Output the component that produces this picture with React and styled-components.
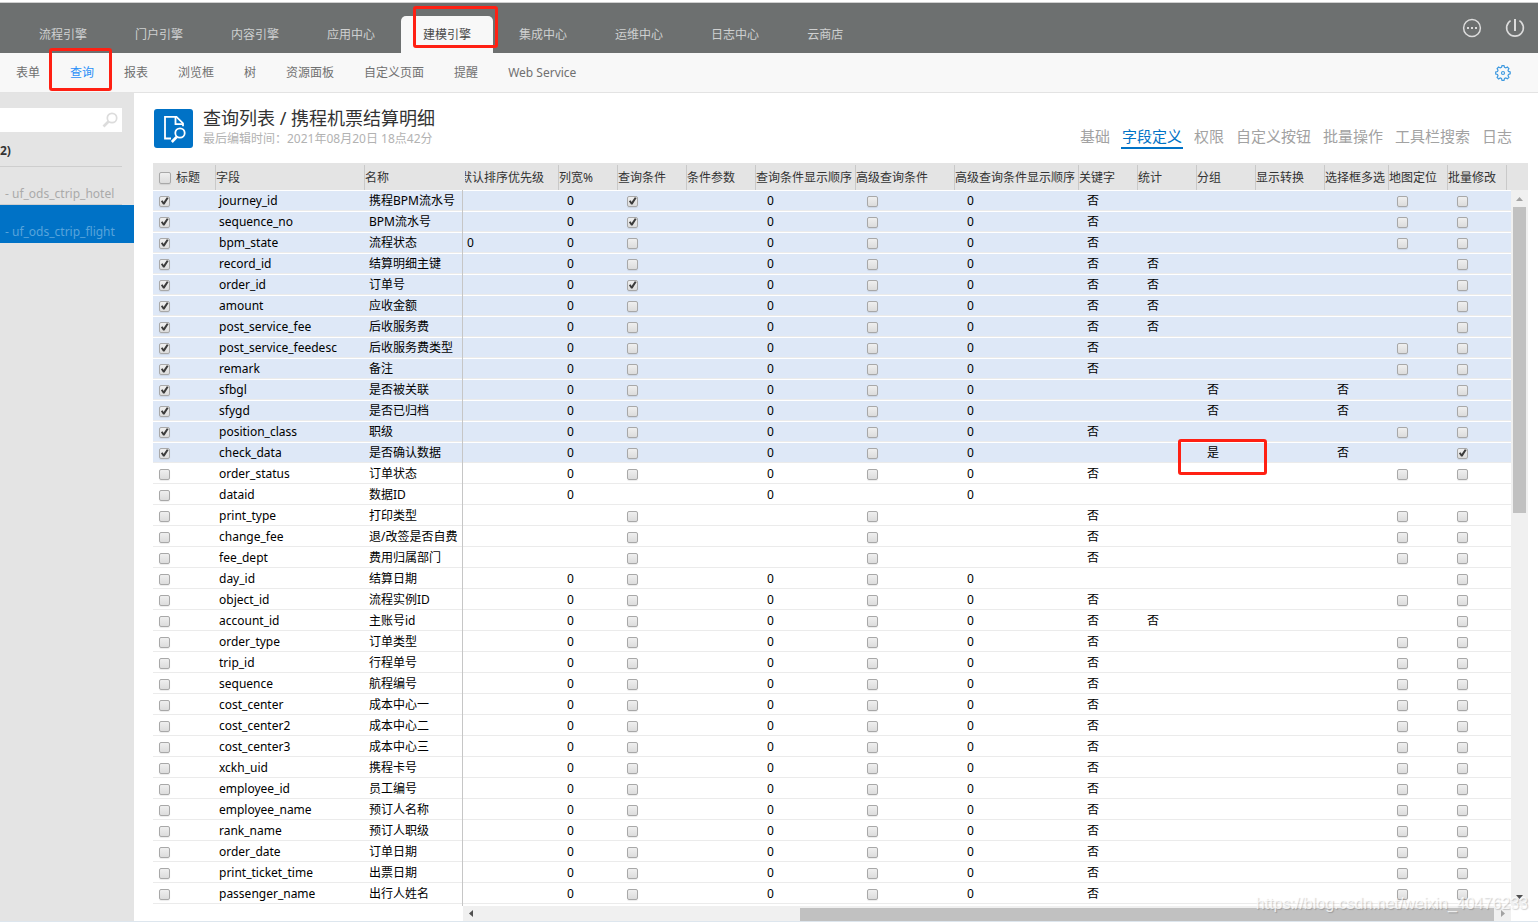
import React, { useState } from 'react';
import styled, { createGlobalStyle, css } from 'styled-components';

const GlobalStyle = createGlobalStyle`
* { box-sizing: border-box; }
body {
  margin: 0;
  background: #fff;
  color: #333;
  font: 12px/16px "Noto Sans", "Noto Sans CJK SC", sans-serif;
}
button, input { font: inherit; color: inherit; }
`;

const Page = styled.div`
display: flex;
flex-direction: column;
min-height: 100vh;
padding-top: 2px;
border-bottom: 1px solid #dde6ee;
`;
const TopBar = styled.header`
display: flex;
justify-content: space-between;
height: 51px;
padding: 0 13px 0 17px;
background: #6d7070;
border-top: 1px solid #d0d0d0;
`;
const TopTabs = styled.nav`
display: flex;
align-items: flex-end;
gap: 4px;
`;
const TopTab = styled.a`
position: relative;
height: 37px;
padding: 0 22px;
border-radius: 5px 5px 0 0;
line-height: 38px;
white-space: nowrap;
text-decoration: none;
color: ${(props) => (props.$active ? '#4a4a4a' : '#cfd0d0')};
background: ${(props) => (props.$active ? '#f8f8f8' : 'none')};
`;
const TopActions = styled.div`
display: flex;
align-items: center;
gap: 23px;
`;
const IconButton = styled.button`
display: flex;
padding: 0;
border: 0;
background: none;
color: ${(props) => props.$color};
`;
const SubBar = styled.nav`
display: flex;
align-items: center;
gap: 30px;
height: 40px;
padding: 0 27px 0 16px;
background: #f8f8f8;
border-bottom: 1px solid #e3e3e3;
`;
const SubLink = styled.a`
position: relative;
white-space: nowrap;
text-decoration: none;
color: ${(props) => (props.$active ? '#2a8ff7' : '#707070')};
`;
const Spacer = styled.span`
flex: 1;
`;

const markBoxes = {
  tab: css`left: 12px; top: -10px; width: 85px; height: 42px;`,
  sub: css`left: -21px; top: -17px; width: 63px; height: 43px;`,
  cell: css`left: -25px; top: -4px; width: 89px; height: 36px;`,
};
const Mark = styled.span`
position: absolute;
z-index: 2;
border: 3px solid #ff2013;
border-radius: 3px;
pointer-events: none;
${(props) => markBoxes[props.$on]}
`;

const Body = styled.div`
display: flex;
flex: 1;
`;
const Side = styled.aside`
flex: none;
width: 134px;
padding-top: 15px;
background: #e4e4e4;
`;
const SearchWrap = styled.label`
display: flex;
align-items: center;
height: 24px;
margin-right: 12px;
padding-right: 4px;
background: #fff;
`;
const SearchInput = styled.input`
flex: 1;
min-width: 0;
height: 24px;
border: 0;
outline: none;
background: none;
`;
const SideCount = styled.div`
height: 35px;
margin-right: 12px;
border-bottom: 1px solid #cecece;
line-height: 38px;
font-weight: bold;
color: #333;
`;
const SideLink = styled.a`
display: block;
height: 38px;
padding: 19px 0 0 5px;
white-space: nowrap;
text-decoration: none;
color: ${(props) => (props.$active ? '#58a4db' : '#aaa')};
background: ${(props) => (props.$active ? '#0072c6' : 'linear-gradient(#cecece, #cecece) 0 100% / 122px 1px no-repeat')};
`;

const Main = styled.main`
flex: 1;
min-width: 0;
padding: 16px 10px 0 19px;
`;
const Heading = styled.div`
display: flex;
gap: 10px;
height: 54px;
padding-left: 1px;
`;
const HeadIcon = styled.div`
width: 39px;
height: 39px;
border-radius: 3px;
background: #0072c6;
`;
const Title = styled.h1`
margin: 0;
font-size: 18px;
font-weight: normal;
line-height: 18px;
color: #333;
`;
const SubTitle = styled.div`
line-height: 24px;
color: #b2b2b2;
`;
const PageTabs = styled.nav`
display: flex;
align-items: flex-start;
gap: 10px;
margin-left: auto;
padding: 16px 15px 0 0;
`;
const PageTab = styled.a`
height: 24px;
padding: 0 1px;
font-size: 15px;
line-height: 22px;
white-space: nowrap;
text-decoration: none;
color: ${(props) => (props.$active ? '#0072c6' : '#a2a2a2')};
border-bottom: 2px solid ${(props) => (props.$active ? '#0072c6' : 'transparent')};
`;

const TableArea = styled.div`
display: grid;
grid-template-columns: 1fr 17px;
`;
const Table = styled.table`
display: contents;
`;
const Thead = styled.thead`
display: block;
grid-column: 1 / -1;
background: #e4e4e4;
`;
const HeadRow = styled.tr`
display: grid;
grid-template-columns: 62px 149px 101px 93px 59px 69px 69px 100px 99px 124px 59px 59px 59px 69px 64px 59px 59px 1fr;
height: 27px;
padding-top: 2px;
`;
const Th = styled.th`
display: flex;
align-items: center;
justify-content: ${(props) => (props.$clipped ? 'flex-end' : 'flex-start')};
overflow: hidden;
padding: ${(props) => (props.$clipped ? '0 14px 0 0' : '0')};
border-left: ${(props) => (props.$plain ? '0' : '1px solid #c9c9c9')};
font-weight: normal;
white-space: nowrap;
color: #333;
`;
const CheckLabel = styled.label`
display: flex;
align-items: center;
gap: 5px;
padding-left: 6px;
`;
const Tbody = styled.tbody`
display: block;
padding-bottom: 2px;
background: linear-gradient(#c6c6c6, #c6c6c6) 309px 0 / 1px 100% no-repeat;
`;
const Row = styled.tr`
display: grid;
grid-template-columns: 62px 150px 97px 1px 100px 60px 70px 70px 100px 100px 120px 60px 60px 60px 70px 60px 60px 1fr;
height: 21px;
border-top: 1px solid #fff;
border-bottom: 1px solid #ebebeb;
background: ${(props) => (props.$selected ? '#dee8f7' : '#fff')};
`;
const Td = styled.td`
position: relative;
display: flex;
align-items: center;
padding: 0 0 0 4px;
white-space: nowrap;
color: #000;
`;
const CheckTd = styled(Td)`
padding-left: ${(props) => (props.$first ? '6px' : '4px')};
`;
const Divider = styled.td`
height: 21px;
margin-top: -1px;
padding: 0;
background: #c6c6c6;
`;
const Check = styled.input.attrs({ type: 'checkbox' })`
appearance: none;
flex: none;
width: ${(props) => (props.$large ? '12px' : '11px')};
height: ${(props) => (props.$large ? '12px' : '11px')};
margin: 0;
border: 1px solid #a8a8a8;
border-radius: 2px;
background: linear-gradient(#efefef, #dcdcdc);
box-shadow: 0 1px 1px #00000014;
&:checked::after {
  content: "";
  display: block;
  width: 9px;
  height: 9px;
  background: #3c3c3c;
  clip-path: polygon(10% 52%, 28% 42%, 40% 60%, 76% 8%, 96% 18%, 50% 90%, 34% 90%);
}
`;

const VTrack = styled.div`
display: flex;
flex-direction: column;
align-items: center;
padding: 7px 0;
background: #f0f0f0;
`;
const VThumb = styled.div`
width: 13px;
height: calc(43% + 4px);
margin: 6px 0 auto;
background: #c1c1c1;
`;
const HTrack = styled.div`
display: flex;
align-items: center;
height: 15px;
margin-left: 310px;
padding: 0 6px;
background: #f0f0f0;
`;
const HThumb = styled.div`
align-self: flex-end;
width: 67%;
height: 13px;
margin: 0 7px 0 auto;
background: #c1c1c1;
`;
const arrows = {
  up: 'polygon(50% 0, 100% 100%, 0 100%)',
  down: 'polygon(0 0, 100% 0, 50% 100%)',
  left: 'polygon(100% 0, 100% 100%, 0 50%)',
  right: 'polygon(0 0, 100% 50%, 0 100%)',
};
const Arrow = styled.span`
width: ${(props) => (props.$side ? '4px' : '7px')};
height: ${(props) => (props.$side ? '7px' : '4px')};
background: ${(props) => (props.$dark ? '#505050' : '#a3a3a3')};
clip-path: ${(props) => arrows[props.$dir]};
`;
const Watermark = styled.div`
position: absolute;
right: 10px;
bottom: 8px;
z-index: 3;
font: 16px/20px "Liberation Sans", Arial, sans-serif;
color: #ffffffc0;
text-shadow: 1px 1px 1px #00000030;
pointer-events: none;
`;

const topTabs = ['流程引擎', '门户引擎', '内容引擎', '应用中心', '建模引擎', '集成中心', '运维中心', '日志中心', '云商店'];
const subLinks = ['表单', '查询', '报表', '浏览框', '树', '资源面板', '自定义页面', '提醒', 'Web Service'];
const pageTabs = ['基础', '字段定义', '权限', '自定义按钮', '批量操作', '工具栏搜索', '日志'];
const heads = ['字段', '名称', '默认排序优先级', '列宽%', '查询条件', '条件参数', '查询条件显示顺序', '高级查询条件',
  '高级查询条件显示顺序', '关键字', '统计', '分组', '显示转换', '选择框多选', '地图定位', '批量修改'];

// one character per column: 0 = zero, n = 否, y = 是, x = ticked, o = unticked, - = empty
const rows = [
  ['journey_id', '携程BPM流水号', '-0x-0o0n----oo'],
  ['sequence_no', 'BPM流水号', '-0x-0o0n----oo'],
  ['bpm_state', '流程状态', '00o-0o0n----oo'],
  ['record_id', '结算明细主键', '-0o-0o0nn----o'],
  ['order_id', '订单号', '-0x-0o0nn----o'],
  ['amount', '应收金额', '-0o-0o0nn----o'],
  ['post_service_fee', '后收服务费', '-0o-0o0nn----o'],
  ['post_service_feedesc', '后收服务费类型', '-0o-0o0n----oo'],
  ['remark', '备注', '-0o-0o0n----oo'],
  ['sfbgl', '是否被关联', '-0o-0o0--n-n-o'],
  ['sfygd', '是否已归档', '-0o-0o0--n-n-o'],
  ['position_class', '职级', '-0o-0o0n----oo'],
  ['check_data', '是否确认数据', '-0o-0o0--y-n-x'],
  ['order_status', '订单状态', '-0o-0o0n----oo'],
  ['dataid', '数据ID', '-0--0-0-------'],
  ['print_type', '打印类型', '--o--o-n----oo'],
  ['change_fee', '退/改签是否自费', '--o--o-n----oo'],
  ['fee_dept', '费用归属部门', '--o--o-n----oo'],
  ['day_id', '结算日期', '-0o-0o0------o'],
  ['object_id', '流程实例ID', '-0o-0o0n----oo'],
  ['account_id', '主账号id', '-0o-0o0nn----o'],
  ['order_type', '订单类型', '-0o-0o0n----oo'],
  ['trip_id', '行程单号', '-0o-0o0n----oo'],
  ['sequence', '航程编号', '-0o-0o0n----oo'],
  ['cost_center', '成本中心一', '-0o-0o0n----oo'],
  ['cost_center2', '成本中心二', '-0o-0o0n----oo'],
  ['cost_center3', '成本中心三', '-0o-0o0n----oo'],
  ['xckh_uid', '携程卡号', '-0o-0o0n----oo'],
  ['employee_id', '员工编号', '-0o-0o0n----oo'],
  ['employee_name', '预订人名称', '-0o-0o0n----oo'],
  ['rank_name', '预订人职级', '-0o-0o0n----oo'],
  ['order_date', '订单日期', '-0o-0o0n----oo'],
  ['print_ticket_time', '出票日期', '-0o-0o0n----oo'],
  ['passenger_name', '出行人姓名', '-0o-0o0n----oo'],
];
const cellText = { 0: '0', n: '否', y: '是', '-': '' };

function FieldRow({ row }) {
  const [field, name, cells] = row;
  const [selected, setSelected] = useState(rows.indexOf(row) < 13);

  return (
    <Row $selected={selected}>
      <CheckTd $first>
        <Check aria-label={`标题 ${field}`} checked={selected} onChange={(e) => setSelected(e.target.checked)} />
      </CheckTd>
      <Td>{field}</Td>
      <Td>{name}</Td>
      <Divider aria-hidden="true" />
      {cells.split('').map((cell, i) => (cell === 'x' || cell === 'o' ? (
        <CheckTd key={heads[i + 2]}>
          <Check aria-label={`${heads[i + 2]} ${field}`} defaultChecked={cell === 'x'} />
        </CheckTd>
      ) : (
        <Td key={heads[i + 2]}>
          {cellText[cell]}
          {cell === 'y' && <Mark $on="cell" />}
        </Td>
      )))}
    </Row>
  );
}

function App() {
  return (
    <>
      <GlobalStyle />
      <Page>
        <TopBar>
          <TopTabs>
            {topTabs.map((tab) => (
              <TopTab key={tab} href="#" $active={tab === '建模引擎'}>
                {tab}
                {tab === '建模引擎' && <Mark $on="tab" />}
              </TopTab>
            ))}
          </TopTabs>
          <TopActions>
            <IconButton type="button" aria-label="更多" $color="#dcdcdc">
              <svg width="20" height="20" viewBox="0 0 20 20" fill="none" stroke="currentColor">
                <circle cx="10" cy="10" r="8.4" strokeWidth="1.5" />
                <path d="M5 10h2M9 10h2M13 10h2" strokeWidth="2" />
              </svg>
            </IconButton>
            <IconButton type="button" aria-label="退出" $color="#dcdcdc">
              <svg width="20" height="20" viewBox="0 0 20 20" fill="none" stroke="currentColor">
                <path d="M5.600 2.600a8.400 8.400 0 1 0 8.800 0" strokeWidth="1.6" />
                <path d="M10 1v12" strokeWidth="2" />
              </svg>
            </IconButton>
          </TopActions>
        </TopBar>
        <SubBar>
          {subLinks.map((link) => (
            <SubLink key={link} href="#" $active={link === '查询'}>
              {link}
              {link === '查询' && <Mark $on="sub" />}
            </SubLink>
          ))}
          <Spacer />
          <IconButton type="button" aria-label="设置" $color="#3f9ae0">
            <svg width="16" height="16" viewBox="0 0 16 16" fill="none" stroke="currentColor" strokeWidth="1.2">
              <path d="M6.5 2.4 7 .7h2l.5 1.7 1.3.5 1.6-.9 1.5 1.5-.9 1.7.5 1.2 1.7.5v2l-1.7.5-.5 1.3.9 1.6-1.5 1.5-1.6-.9-1.3.5L9 15.3H7l-.5-1.8-1.3-.5-1.6.9-1.5-1.5.9-1.6-.5-1.3L.7 9V7l1.8-.5L3 5.3l-.9-1.7L3.6 2l1.6.9z" />
              <circle cx="8" cy="8" r="1.5" />
            </svg>
          </IconButton>
        </SubBar>
        <Body>
          <Side>
            <SearchWrap>
              <SearchInput aria-label="搜索" />
              <svg width="16" height="16" viewBox="0 0 16 16" fill="none" stroke="#dcdcdc">
                <circle cx="10" cy="6" r="4.7" strokeWidth="1.7" />
                <path d="M6.5 9.5 1.500 14.5" strokeWidth="2.6" />
              </svg>
            </SearchWrap>
            <SideCount>2)</SideCount>
            <SideLink href="#">- uf_ods_ctrip_hotel</SideLink>
            <SideLink href="#" $active>- uf_ods_ctrip_flight</SideLink>
          </Side>
          <Main>
            <Heading>
              <HeadIcon>
                <svg width="39" height="39" viewBox="0 0 39 39" fill="none" stroke="#fff" strokeWidth="1.8">
                  <path d="M17 29.5h-6V7.8h11.5l6.5 6.500v3" />
                  <path d="M21.5 8v7.2H29" />
                  <circle cx="26" cy="24" r="4.7" />
                  <path d="M22.6 28 17.8 33" strokeWidth="2.6" />
                </svg>
              </HeadIcon>
              <div>
                <Title>查询列表 / 携程机票结算明细</Title>
                <SubTitle>最后编辑时间：2021年08月20日 18点42分</SubTitle>
              </div>
              <PageTabs>
                {pageTabs.map((tab) => (
                  <PageTab key={tab} href="#" $active={tab === '字段定义'}>{tab}</PageTab>
                ))}
              </PageTabs>
            </Heading>
            <TableArea>
              <Table>
                <Thead>
                  <HeadRow>
                    <Th $plain>
                      <CheckLabel>
                        <Check $large />
                        标题
                      </CheckLabel>
                    </Th>
                    {heads.map((head) => (
                      <Th key={head} $clipped={head === heads[2]} $plain={head === heads[2]}>{head}</Th>
                    ))}
                    <Th aria-hidden="true" />
                  </HeadRow>
                </Thead>
                <Tbody>
                  {rows.map((row) => <FieldRow key={row[0]} row={row} />)}
                </Tbody>
              </Table>
              <VTrack>
                <Arrow $dir="up" />
                <VThumb />
                <Arrow $dir="down" $dark />
              </VTrack>
              <HTrack>
                <Arrow $dir="left" $side $dark />
                <HThumb />
                <Arrow $dir="right" $side />
              </HTrack>
            </TableArea>
          </Main>
        </Body>
        <Watermark>https://blog.csdn.net/weixin_40476233</Watermark>
      </Page>
    </>
  );
}

export default App;
